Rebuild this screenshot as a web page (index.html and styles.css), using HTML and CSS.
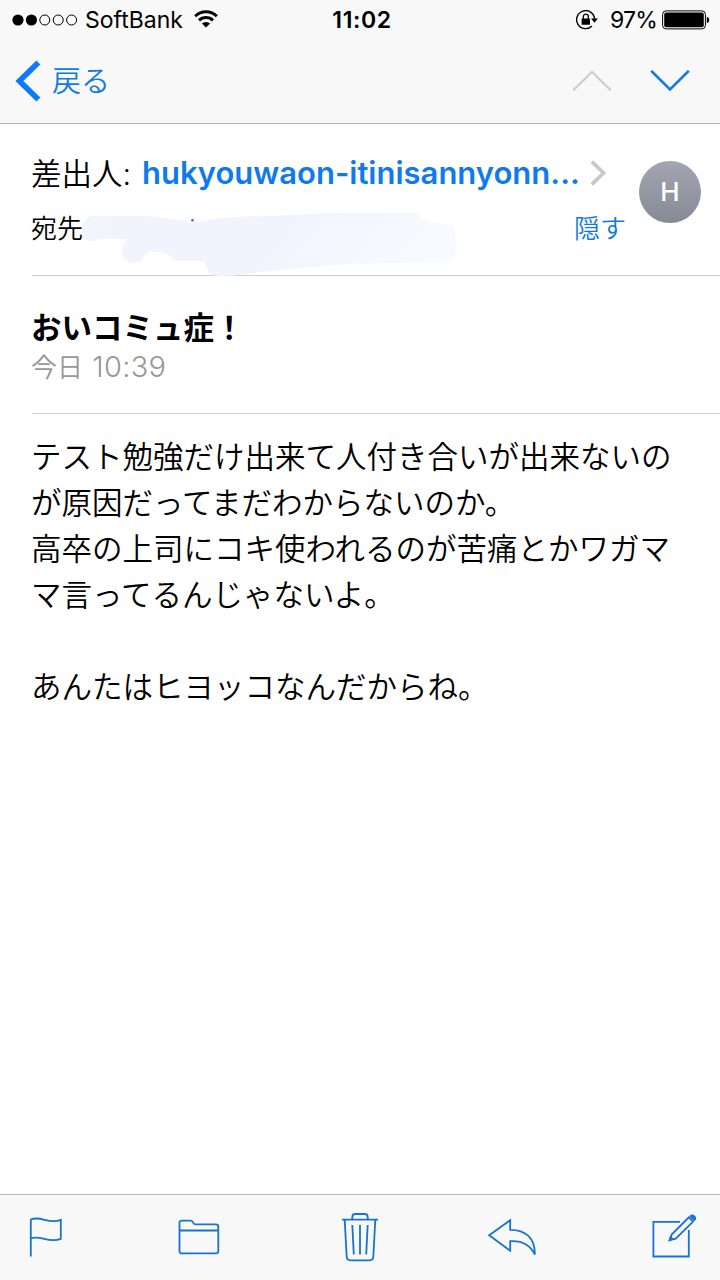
FILE: index.html
```html
<!DOCTYPE html>
<html lang="ja">
<head>
  <meta charset="UTF-8" />
  <meta name="viewport" content="width=device-width, initial-scale=1.0" />
  <title>メール</title>
  <link rel="stylesheet" href="styles.css">
</head>
<body>
  <div class="pantalla">

    <header class="top">
      <div class="status">
        <div class="status-left">
          <svg class="signal" width="66" height="12" viewBox="0 0 66 12">
            <circle cx="6" cy="6" r="5.6" fill="#000" />
            <circle cx="19.4" cy="6" r="5.6" fill="#000" />
            <g fill="none" stroke="#000" stroke-width="1">
              <circle cx="32.8" cy="6" r="5" />
              <circle cx="46.2" cy="6" r="5" />
              <circle cx="59.6" cy="6" r="5" />
            </g>
          </svg>
          <span class="carrier">SoftBank</span>
          <svg class="wifi" width="24" height="18" viewBox="0 0 24 18">
            <g fill="none" stroke="#000" stroke-width="2.9">
              <path d="M1.2 6.2a15.4 15.4 0 0 1 21.6 0" />
              <path d="M5 10.4a10 10 0 0 1 14 0" />
            </g>
            <path d="M7.9 13.6a5.8 5.8 0 0 1 8.2 0L12 17.6z" fill="#000" />
          </svg>
        </div>
        <div class="clock">11:02</div>
        <div class="status-right">
          <svg class="lock" width="24" height="20" viewBox="0 0 24 20">
            <path d="M17 16A9 9 0 1 1 19.6 9" fill="none" stroke="#000" stroke-width="1.4" />
            <path d="M16 8.6h7l-3.5 4.2z" fill="#000" />
            <rect x="6.6" y="8.6" width="8.4" height="6.2" rx=".6" fill="#000" />
            <path d="M8.3 9V6.7a2.5 2.5 0 0 1 5 0V9" fill="none" stroke="#000" stroke-width="1.3" />
          </svg>
          <span class="percent">97%</span>
          <svg class="battery" width="48" height="20" viewBox="0 0 48 20">
            <rect x=".6" y=".9" width="42.8" height="18" rx="3.5" fill="none" stroke="#000" stroke-width="1" />
            <rect x="2.2" y="2.5" width="39.6" height="14.8" rx="2" fill="#000" />
            <path d="M44.8 6.8c3.2.8 3.2 5.6 0 6.4z" fill="#000" />
          </svg>
        </div>
      </div>

      <nav class="nav">
        <a class="back">
          <svg width="26" height="42" viewBox="0 0 26 42">
            <path d="M23.4 2.4 4.4 21l19 18.6" fill="none" stroke="#0a7aff" stroke-width="5.6" />
          </svg>
          <span>戻る</span>
        </a>
        <div class="arrows">
          <svg width="40" height="22" viewBox="0 0 40 22">
            <path d="M1.2 20.4 20 1.8l18.8 18.6" fill="none" stroke="#cfcfd0" stroke-width="2.3" />
          </svg>
          <svg width="40" height="22" viewBox="0 0 40 22">
            <path d="M1.2.8 20 19.4 38.8.8" fill="none" stroke="#0f7ae5" stroke-width="2.6" />
          </svg>
        </div>
      </nav>
    </header>

    <main class="mail">
      <section class="people">
        <div class="people-rows">
          <div class="from">
            <span class="label">差出人:</span>
            <span class="address">hukyouwaon-itinisannyonn...</span>
            <svg width="18" height="28" viewBox="0 0 18 28">
              <path d="M2.8 2.6 14.6 14 2.8 25.4" fill="none" stroke="#c7c7cc" stroke-width="3.6" />
            </svg>
          </div>
          <div class="to">
            <span>宛先</span>
            <span class="hide">隠す</span>
          </div>
        </div>
        <div class="avatar">H</div>

        <!-- brocha sobre la dirección -->
        <svg class="smear" width="380" height="68" viewBox="0 0 380 68">
          <defs>
            <linearGradient id="brush" x1="0" y1="0" x2="1" y2=".15">
              <stop offset="0" stop-color="#f4f5f9" />
              <stop offset=".25" stop-color="#f1f4fd" />
              <stop offset=".55" stop-color="#f1f4fe" />
              <stop offset="1" stop-color="#f9faff" />
            </linearGradient>
          </defs>
          <path fill="url(#brush)" d="M12 5h55c18 1 30 5 46 5.7 8 0 11-1 17-2C150 5.500 168 5.500 190 5c30-1.500 55-3 83-3.300h60c6 .3 6 3.300 10 6.300 4 2.500 6 3.500 10 4 8 0 16 0 20 4 3 3 3 7 2 10 2 5 2 11 0 16-1 6-3 10-8 10h-50c-60 0-90 5-127 8-18 1.500-28 5-50 5-8 0-11-3-12-6-2-3-3-5-3-9H97c-4-1-6-3-7-5-3-3-6-4-10-4-6 0-9-1-13 1-2 2-3 5-5 7-3 3-6 3-10 3-6-1-10-5-10-10 0-6 2-10 6-14H23c-4 0-8 2-13 2-5-1-8-4-8-8C2 15 4 5 12 5z" />
          <circle cx="112.5" cy="9.3" r="1.3" fill="#356fc0" />
        </svg>
      </section>

      <section class="subject">
        <h1>おいコミュ症！</h1>
        <p class="date">今日 <span class="time">10:39</span></p>
      </section>

      <section class="text">
        <p>テスト勉強だけ出来て人付き合いが出来ないの<br>が原因だってまだわからないのか。<br>高卒の上司にコキ使われるのが苦痛とかワガマ<br>マ言ってるんじゃないよ。</p>
        <p>あんたはヒヨッコなんだからね。</p>
      </section>
    </main>

    <footer class="toolbar">
      <svg class="flag" width="36" height="50" viewBox="0 0 36 50">
        <path d="M2.8 43.500V6.500c10-4.500 18 5.500 30 .3v19c-12 5.200-20-4.200-30-.3" />
      </svg>
      <svg class="folder" width="44" height="50" viewBox="0 0 44 50">
        <path d="M2.500 10c0-1.700.8-2.400 2.400-2.400h8.600c1.700 0 2 .6 2.500 1.900.6 1.500 1.200 1.900 2.700 1.900h20.200c1.700 0 2.400.8 2.400 2.400v24.200c0 1.700-.8 2.400-2.400 2.400H4.900c-1.700 0-2.400-.8-2.400-2.400zM2.500 17.500h38.800" />
      </svg>
      <svg class="trash" width="38" height="50" viewBox="0 0 38 50">
        <path d="M1 6.700h36M11.300 6.500V4c0-2 1-3 3-3h9.400c2 0 3 1 3 3v2.500M3.700 7l2 37c.2 2.200 1.300 3.300 3.300 3.300h20c2 0 3.100-1.100 3.300-3.300l2-37M11.300 12l1.500 29.500M19 12v29.500M26.700 12l-1.500 29.500" />
      </svg>
      <svg class="reply" width="50" height="50" viewBox="0 0 50 50">
        <path d="M3.200 22.300 24.200 7.300v9.500C38.500 16.500 49.300 24.500 48.800 41.500 44 31.500 36.500 27.500 24.200 28.200v9.500z" />
      </svg>
      <svg class="compose" width="48" height="50" viewBox="0 0 48 50">
        <path d="M30 8.900H3.400v34.600h35.400V17" />
        <path d="m20 27 1.700-5.400L38.800 4.300l4.300 4.300-17.400 17z" />
        <path class="solid" d="m18 28.800 2.200-6.200 4 4zM39.300 3.200l1.600-1.500c2.700-1.300 6.300 2.200 5 5l-1.600 1.600z" />
      </svg>
    </footer>

  </div>
</body>
</html>
```

FILE: styles.css
```css
    body {
      margin: 0;
      font-family: Inter, "Noto Sans CJK JP", sans-serif;
      background: #fff;
      color: #000;
    }

    svg {
      display: block;
      flex-shrink: 0;
    }

    .pantalla {
      width: 720px;
      height: 1280px;
      display: flex;
      flex-direction: column;
      overflow: hidden;
    }

    /* Barra superior */
    .top {
      height: 124px;
      box-sizing: border-box;
      background: #f8f8f8;
      border-bottom: 1px solid #b4b4b6;
    }

    .status {
      display: grid;
      grid-template-columns: 1fr auto 1fr;
      height: 40px;
      align-items: center;
      padding: 0 10px 0 12px;
      font-size: 23px;
      line-height: 40px;
    }

    .status-left,
    .status-right {
      display: flex;
      align-items: center;
    }

    .status-right {
      justify-content: flex-end;
    }

    .carrier {
      margin-left: 7px;
    }

    .wifi {
      margin-left: 11px;
      margin-top: -3px;
    }

    .clock {
      padding-left: 2px;
      font-weight: 600;
      letter-spacing: 0.6px;
    }

    .lock {
      margin-top: -1px;
    }

    .percent {
      margin: 0 5px 0 11px;
      letter-spacing: -0.8px;
    }

    .nav {
      display: flex;
      justify-content: space-between;
      align-items: center;
      height: 81px;
      padding: 0 30px 0 15px;
    }

    .back {
      display: flex;
      align-items: center;
      gap: 11px;
      color: #0f7ae5;
      font-size: 29px;
      font-weight: 350;
    }

    .back span {
      margin-top: -4px;
    }

    .arrows {
      display: flex;
      gap: 38px;
    }

    /* Cabecera del correo */
    .mail {
      flex: 1;
      padding-left: 32px;
    }

    .people {
      position: relative;
      display: flex;
      height: 151px;
      border-bottom: 1px solid #cfcfd1;
    }

    .people-rows {
      width: 594px;
      padding-top: 26px;
    }

    .from {
      display: flex;
      align-items: center;
      height: 46px;
      font-size: 30.5px;
      white-space: nowrap;
    }

    .label {
      width: 111px;
      margin: -3px 0 0 -1px;
      font-weight: 350;
    }

    .address {
      width: 447px;
      color: #0f7af0;
      font-size: 31px;
      font-weight: 600;
      margin-top: -1px;
    }

    .to {
      display: flex;
      justify-content: space-between;
      margin-left: -1px;
      font-size: 26px;
      font-weight: 350;
      line-height: 40px;
      padding-top: 13px;
    }

    .hide {
      color: #0f7ae5;
    }

    .avatar {
      width: 62px;
      height: 62px;
      margin: 37px 0 0 13px;
      border-radius: 50%;
      background: linear-gradient(#a2a6b2, #868a95);
      color: #fff;
      font-size: 26px;
      font-weight: 500;
      line-height: 62px;
      text-align: center;
    }

    .smear {
      position: absolute;
      left: 48px;
      top: 87px;
    }

    .subject {
      height: 137px;
      border-bottom: 1px solid #cfcfd1;
    }

    .subject h1 {
      margin: 0 0 0 -1px;
      padding-top: 31px;
      font-size: 30.5px;
      font-weight: 700;
      line-height: 42px;
    }

    .date {
      margin: 0 0 0 -1px;
      color: #97979a;
      font-size: 26px;
      font-weight: 350;
      line-height: 35px;
    }

    .time {
      margin-left: 2px;
      font-size: 29px;
      letter-spacing: 0.3px;
    }

    .text {
      margin-left: -1px;
      padding-top: 20px;
      font-size: 30.5px;
      font-weight: 350;
      line-height: 46px;
      white-space: nowrap;
    }

    .text p {
      margin: 0 0 46px;
    }

    /* Botones de abajo */
    .toolbar {
      display: flex;
      justify-content: space-between;
      height: 86px;
      box-sizing: border-box;
      padding: 18px 22px 0 28px;
      background: #f8f8f9;
      border-top: 1px solid #b4b4b6;
    }

    .folder {
      margin-right: 6px;
      margin-left: -1px;
    }

    .trash {
      margin-right: -6px;
    }

    .toolbar path {
      fill: none;
      stroke: #1673d4;
      stroke-width: 1.8;
    }

    .toolbar .solid {
      fill: #1673d4;
      stroke: none;
    }
```
